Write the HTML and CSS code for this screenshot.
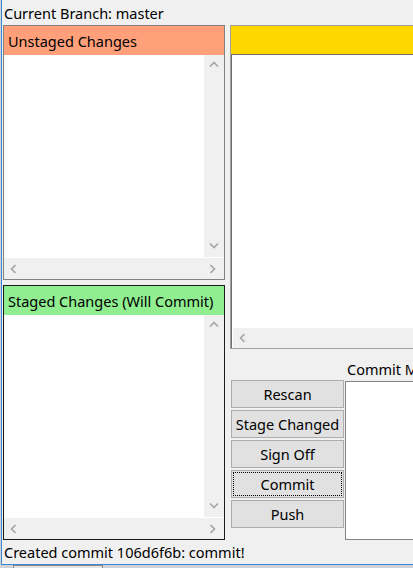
FILE: index.html
```html
<!DOCTYPE html>
<html>
<head>
<meta charset="utf-8">
<link rel="stylesheet" href="styles.css">
</head>
<body>
<div class="screen">
  <div class="window">
    <div class="branch">Current Branch: master</div>
    <div class="main">
      <div class="left">
        <section class="panel unstaged">
          <div class="ph salmon">Unstaged Changes</div>
          <div class="pb">
            <div class="list"></div>
            <div class="vscroll">
              <svg width="10" height="6" viewBox="0 0 10 6"><polyline points="1,5.5 5,1.5 9,5.5" fill="none" stroke="#a6a6a6" stroke-width="1.6"/></svg>
              <svg width="10" height="6" viewBox="0 0 10 6"><polyline points="1,0.5 5,4.5 9,0.5" fill="none" stroke="#a6a6a6" stroke-width="1.6"/></svg>
            </div>
          </div>
          <div class="hscroll">
            <svg width="6" height="10" viewBox="0 0 6 10"><polyline points="5.5,1 1.5,5 5.5,9" fill="none" stroke="#a6a6a6" stroke-width="1.6"/></svg>
            <svg width="6" height="10" viewBox="0 0 6 10"><polyline points="0.5,1 4.5,5 0.5,9" fill="none" stroke="#a6a6a6" stroke-width="1.6"/></svg>
          </div>
        </section>
        <section class="panel staged">
          <div class="ph green">Staged Changes (Will Commit)</div>
          <div class="pb">
            <div class="list"></div>
            <div class="vscroll">
              <svg width="10" height="6" viewBox="0 0 10 6"><polyline points="1,5.5 5,1.5 9,5.5" fill="none" stroke="#a6a6a6" stroke-width="1.6"/></svg>
              <svg width="10" height="6" viewBox="0 0 10 6"><polyline points="1,0.5 5,4.5 9,0.5" fill="none" stroke="#a6a6a6" stroke-width="1.6"/></svg>
            </div>
          </div>
          <div class="hscroll">
            <svg width="6" height="10" viewBox="0 0 6 10"><polyline points="5.5,1 1.5,5 5.5,9" fill="none" stroke="#a6a6a6" stroke-width="1.6"/></svg>
            <svg width="6" height="10" viewBox="0 0 6 10"><polyline points="0.5,1 4.5,5 0.5,9" fill="none" stroke="#a6a6a6" stroke-width="1.6"/></svg>
          </div>
        </section>
      </div>
      <div class="right">
        <section class="diff">
          <div class="dh"></div>
          <div class="dbody">
            <div class="dtext"></div>
            <div class="dscroll">
              <svg width="6" height="10" viewBox="0 0 6 10"><polyline points="5.5,1 1.5,5 5.5,9" fill="none" stroke="#a6a6a6" stroke-width="1.6"/></svg>
            </div>
          </div>
        </section>
        <div class="lower">
          <div class="buttons">
            <div class="btn">Rescan</div>
            <div class="btn">Stage Changed</div>
            <div class="btn">Sign Off</div>
            <div class="btn focus">Commit</div>
            <div class="btn">Push</div>
          </div>
          <div class="msg">
            <div class="msg-label">Commit Message:</div>
            <div class="msg-box"></div>
          </div>
        </div>
      </div>
    </div>
    <div class="status">Created commit 106d6f6b: commit!</div>
  </div>
  <div class="below"><div class="ghost"></div></div>
</div>
</body>
</html>
```

FILE: styles.css
```css
html, body {
  margin: 0;
  padding: 0;
}
body {
  width: 413px;
  height: 568px;
  overflow: hidden;
  background: #f0f0f0;
  font-family: "Noto Sans", "Open Sans", sans-serif;
  font-size: 14.5px;
  color: #000;
}
.screen {
  width: 413px;
  height: 568px;
  background: #cfd3d8;
  overflow: hidden;
}
.window {
  margin-left: 1px;
  height: 564px;
  border-left: 1px solid #3a86d4;
  border-bottom: 1px solid #3a86d4;
  background: #f0f0f0;
  display: flex;
  flex-direction: column;
  width: 600px;
}
.branch {
  height: 25px;
  line-height: 27px;
  padding-left: 2px;
  white-space: nowrap;
  box-sizing: border-box;
}
.main {
  display: flex;
  gap: 5px;
  padding-left: 1px;
  height: 515px;
}
.left {
  width: 222px;
  display: flex;
  flex-direction: column;
  gap: 5px;
}
.panel {
  box-sizing: border-box;
  height: 255px;
  border: 1px solid #828282;
  display: flex;
  flex-direction: column;
  background: #fff;
}
.panel.staged {
  border-color: #1c1c1c;
}
.ph {
  height: 29px;
  line-height: 31px;
  padding-left: 4px;
  white-space: nowrap;
  flex: none;
  overflow: hidden;
}
.salmon { background: #ffa07a; }
.green { background: #90ee90; }
.pb {
  flex: 1;
  display: flex;
}
.list {
  flex: 1;
  background: #fff;
}
.vscroll {
  width: 20px;
  background: #f0f0f0;
  display: flex;
  flex-direction: column;
  justify-content: space-between;
  align-items: center;
  padding: 6px 0 8px;
  box-sizing: border-box;
}
.hscroll {
  height: 21px;
  margin-top: 1px;
  background: #f0f0f0;
  display: flex;
  justify-content: space-between;
  align-items: center;
  padding: 0 8px 0 6px;
  flex: none;
}
.vscroll svg, .hscroll svg, .dscroll svg { display: block; }
.right {
  flex: 1;
  display: flex;
  flex-direction: column;
}
.diff {
  height: 324px;
  box-sizing: border-box;
  border: 1px solid #a0a0a0;
  border-right: none;
  display: flex;
  flex-direction: column;
}
.dh {
  height: 28px;
  background: #ffd700;
  flex: none;
}
.dbody {
  flex: 1;
  border-top: 1px solid #6e6e6e;
  border-left: 1px solid #6e6e6e;
  display: flex;
  flex-direction: column;
  background: #fff;
}
.dtext {
  flex: 1;
}
.dscroll {
  height: 20px;
  margin-left: 1px;
  background: #f0f0f0;
  display: flex;
  align-items: center;
  padding-left: 6px;
}
.lower {
  flex: 1;
  display: grid;
  grid-template-columns: 113px 1fr;
  column-gap: 1px;
  padding-left: 1px;
}
.buttons {
  padding-top: 31px;
  display: flex;
  flex-direction: column;
  gap: 2px;
}
.btn {
  box-sizing: border-box;
  height: 28px;
  line-height: 27px;
  border: 1px solid #adadad;
  background: #e1e1e1;
  text-align: center;
  white-space: nowrap;
}
.btn.focus {
  outline: 1px dotted #000;
  outline-offset: -3px;
}
.msg {
  display: flex;
  flex-direction: column;
}
.msg-label {
  height: 32px;
  line-height: 41px;
  padding-left: 2px;
  white-space: nowrap;
  box-sizing: border-box;
  overflow: hidden;
}
.msg-box {
  height: 159px;
  box-sizing: border-box;
  border: 1px solid #828282;
  border-right: none;
  background: #fff;
}
.status {
  height: 24px;
  line-height: 25px;
  padding-left: 2px;
  white-space: nowrap;
}
.below {
  height: 3px;
  position: relative;
}
.ghost {
  margin-left: 13px;
  width: 88px;
  height: 6px;
  border: 1px solid #8a8a8a;
  background: #e4e4e4;
}
```
